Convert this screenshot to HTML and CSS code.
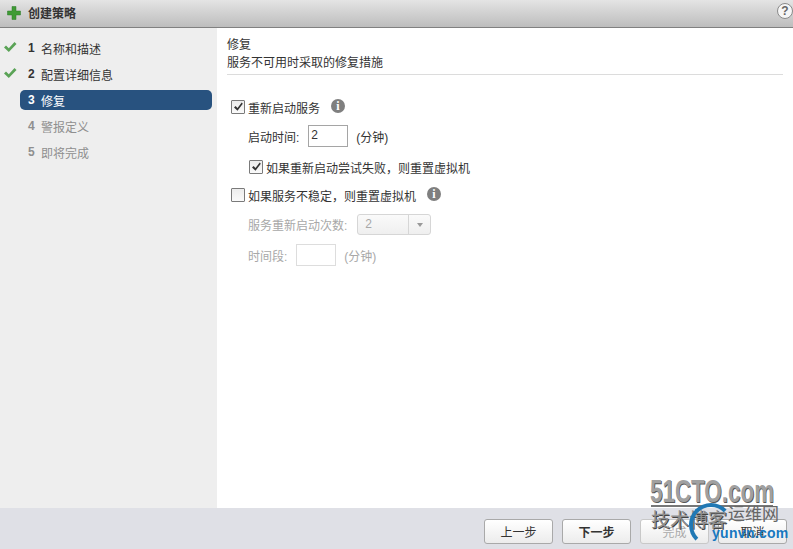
FILE: index.html
```
<!DOCTYPE html>
<html lang="zh">
<head>
<meta charset="utf-8">
<title>创建策略</title>
<link rel="stylesheet" href="styles.css">
</head>
<body>
<div class="app">
  <header class="titlebar">
    <div class="title-left">
      <svg class="plus" viewBox="0 0 14 14" width="14" height="14"><path d="M5 0.500h4v4.500h4.500v4H9v4.500H5V9H0.500V5H5z" fill="#3f9a35" stroke="#2c7a2a" stroke-width="0.500"/></svg>
      <span class="title-text">创建策略</span>
    </div>
    <span class="help">?</span>
  </header>
  <div class="middle">
    <nav class="sidebar">
      <div class="step done"><svg class="check" viewBox="0 0 14 12" width="14" height="12"><path d="M1 6.500l2-2 2.800 2.800L11.500 1l2 2-7.700 8z" fill="#5aa356"/></svg><span class="num">1</span><span>名称和描述</span></div>
      <div class="step done"><svg class="check" viewBox="0 0 14 12" width="14" height="12"><path d="M1 6.500l2-2 2.800 2.800L11.500 1l2 2-7.700 8z" fill="#5aa356"/></svg><span class="num">2</span><span>配置详细信息</span></div>
      <div class="step active"><span class="num">3</span><span>修复</span></div>
      <div class="step off"><span class="num">4</span><span>警报定义</span></div>
      <div class="step off"><span class="num">5</span><span>即将完成</span></div>
    </nav>
    <main class="content">
      <div class="heading">
        <div>修复</div>
        <div>服务不可用时采取的修复措施</div>
      </div>
      <div class="form">
        <div class="row row-a">
          <span class="box"><svg viewBox="0 0 12 12" width="12" height="12"><path d="M2 6.500l1.600-1.600 1.900 2L9.700 1.500l1.100 1.200-5.300 7.100z" fill="#333"/></svg></span>
          <span>重新启动服务</span>
          <span class="info">i</span>
        </div>
        <div class="row row-b">
          <span>启动时间:</span>
          <span class="input">2</span>
          <span class="unit">(分钟)</span>
        </div>
        <div class="row row-c">
          <span class="box"><svg viewBox="0 0 12 12" width="12" height="12"><path d="M2 6.500l1.600-1.600 1.900 2L9.700 1.500l1.100 1.200-5.300 7.100z" fill="#333"/></svg></span>
          <span>如果重新启动尝试失败，则重置虚拟机</span>
        </div>
        <div class="row row-d">
          <span class="box"></span>
          <span>如果服务不稳定，则重置虚拟机</span>
          <span class="info">i</span>
        </div>
        <div class="row row-e disabled">
          <span>服务重新启动次数:</span>
          <span class="select"><span class="select-val">2</span><span class="select-arrow"></span></span>
        </div>
        <div class="row row-f disabled">
          <span>时间段:</span>
          <span class="input input-off"></span>
          <span class="unit">(分钟)</span>
        </div>
      </div>
    </main>
  </div>
  <footer class="footer">
    <button class="btn">上一步</button>
    <button class="btn strong">下一步</button>
    <button class="btn faded">完成</button>
    <button class="btn">取消</button>
  </footer>
  <div class="mark">
    <div class="mark-top">51CTO.com</div>
    <div class="mark-line"></div>
    <div class="mark-cn">技术博客</div>
    <div class="mark-yw">运维网</div>
    <div class="mark-ring"></div>
    <div class="mark-url">yunvn.com</div>
  </div>
</div>
</body>
</html>
```
FILE: styles.css
```
* { box-sizing: border-box; }
html, body { margin: 0; padding: 0; }
body {
  width: 793px;
  height: 549px;
  overflow: hidden;
  background: #fff;
  font-family: "Liberation Sans", "Noto Sans CJK SC", sans-serif;
  font-size: 12px;
  color: #333;
}
.app { position: relative; display: flex; flex-direction: column; width: 793px; height: 549px; }

.titlebar {
  flex: 0 0 28px;
  display: flex;
  align-items: center;
  justify-content: space-between;
  padding: 0 0 2px 7px;
  background: linear-gradient(#e4e4e4, #bdbdbd);
  border-bottom: 1px solid #808080;
}
.title-left { display: flex; align-items: center; gap: 7px; }
.title-text { font-weight: bold; font-size: 12px; color: #333; }
.help {
  width: 16px;
  height: 16px;
  margin-top: -3px;
  border-radius: 50%;
  background: #f6f6f6;
  border: 1px solid #8a8a8a;
  color: #666;
  font-size: 12px;
  font-weight: bold;
  line-height: 14px;
  text-align: center;
}

.middle { flex: 1; display: flex; min-height: 0; }
.sidebar {
  flex: 0 0 217px;
  background: #eeeeee;
  padding: 10px 5px 0 3px;
  display: flex;
  flex-direction: column;
  gap: 6px;
}
.step {
  position: relative;
  display: flex;
  align-items: center;
  height: 20px;
  margin-left: 17px;
  padding-left: 8px;
  font-size: 12px;
  border-radius: 5px;
  color: #333;
}
.num { width: 13px; font-weight: bold; font-size: 12px; }
.check { position: absolute; left: -17px; top: 3px; }
.active { background: #28527f; color: #fff; }
.off { color: #8f8f8f; }

.content { flex: 1; padding: 8px 10px 0 10px; }
.heading {
  line-height: 18px;
  font-size: 12px;
  padding-bottom: 2px;
  border-bottom: 1px solid #dcdcdc;
}
.form { padding-left: 4px; }
.row { display: flex; align-items: center; height: 20px; }
.row-a { margin-top: 22px; }
.row-b { margin-top: 8px; padding-left: 17px; height: 22px; }
.row-c { margin-top: 10px; padding-left: 18px; }
.row-d { margin-top: 8px; }
.row-e { margin-top: 8px; padding-left: 17px; height: 22px; }
.row-f { margin-top: 9px; padding-left: 17px; height: 22px; }
.disabled { color: #a8a8a8; }

.box {
  flex: none;
  width: 14px;
  height: 14px;
  margin-right: 3px;
  border: 1px solid #7a7a7a;
  border-radius: 1px;
  background: linear-gradient(#ececec, #fafafa);
  display: flex;
  align-items: center;
  justify-content: center;
}
.info {
  flex: none;
  width: 14px;
  height: 14px;
  margin-left: 11px;
  margin-top: -3px;
  border-radius: 50%;
  background: #7f7f7f;
  color: #fff;
  font: bold 12px/14px "Liberation Serif", serif;
  text-align: center;
}
.input {
  width: 40px;
  height: 22px;
  margin-left: 9px;
  border: 1px solid #a5a5a5;
  background: #fff;
  padding-left: 2px;
  line-height: 18px;
  color: #333;
}
.input-off { border-color: #dddddd; }
.unit { margin-left: 8px; }
.select {
  display: flex;
  width: 74px;
  height: 21px;
  margin-left: 10px;
  border: 1px solid #d6d6d6;
  border-radius: 3px;
  background: linear-gradient(#fafafa, #efefef);
}
.select-val { width: 51px; padding-left: 7px; line-height: 19px; border-right: 1px solid #d6d6d6; }
.select-arrow {
  width: 0;
  height: 0;
  margin: 8px 0 0 8px;
  border-left: 3px solid transparent;
  border-right: 3px solid transparent;
  border-top: 4px solid #999;
}

.footer {
  flex: 0 0 41px;
  background: #dfe0e6;
  display: flex;
  justify-content: flex-end;
  gap: 9px;
  padding: 11px 6px 0 0;
}
.btn {
  width: 69px;
  height: 25px;
  padding: 0;
  border: 1px solid #a9a9a9;
  border-radius: 3px;
  background: linear-gradient(#ffffff, #ececec);
  font: 12px "Liberation Sans", "Noto Sans CJK SC", sans-serif;
  color: #333;
}
.strong { font-weight: bold; }
.faded { color: #aaa; border-color: #c8c8c8; }

.mark { position: absolute; left: 650px; top: 478px; width: 143px; height: 71px; pointer-events: none; }
.mark-top {
  position: absolute;
  left: 0;
  top: 0;
  font: bold 32px/26px "Liberation Sans", sans-serif;
  color: #a0a0a0;
  text-shadow: 1px 1px 0 #555;
  white-space: nowrap;
  transform: scaleX(0.700);
  transform-origin: left center;
}
.mark-line { position: absolute; left: 1px; top: 27px; width: 122px; height: 2px; background: #777; }
.mark-cn {
  position: absolute;
  left: 1px;
  top: 31px;
  font-size: 19px;
  line-height: 24px;
  color: #8f8f8f;
  text-shadow: 1px 1px 0 #444;
  white-space: nowrap;
}
.mark-yw {
  position: absolute;
  left: 78px;
  top: 27px;
  font-size: 17px;
  line-height: 20px;
  color: #666;
  white-space: nowrap;
}
.mark-ring {
  position: absolute;
  left: 39px;
  top: 25px;
  width: 44px;
  height: 44px;
  border: 4px solid transparent;
  border-left-color: #2078b4;
  border-top-color: #2078b4;
  border-radius: 50%;
}
.mark-url {
  position: absolute;
  left: 62px;
  top: 47px;
  font: bold 14px/16px "Liberation Sans", sans-serif;
  letter-spacing: 0.300px;
  color: #1878c0;
  white-space: nowrap;
}
```
